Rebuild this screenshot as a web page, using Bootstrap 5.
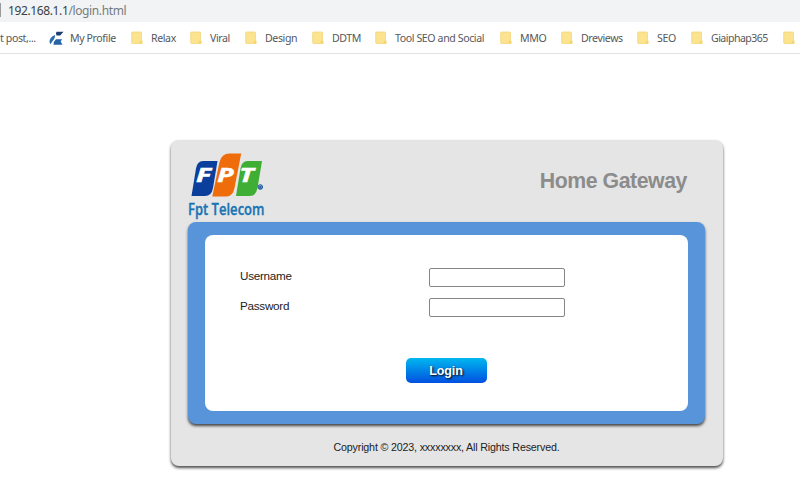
<!DOCTYPE html>
<html lang="en">
<head>
    <meta charset="UTF-8">
    <meta name="viewport" content="width=device-width, initial-scale=1.0">
    <title>Home Gateway</title>
    <link href="https://cdn.jsdelivr.net/npm/bootstrap@5.3.2/dist/css/bootstrap.min.css" rel="stylesheet">
    <style>
        body {
            background-color: #fff;
            font-family: "Liberation Sans", Arial, sans-serif;
            font-size: 12px;
            color: #222;
            height: 493px;
            overflow: hidden;
        }
        .address-bar {
            height: 22px;
            background-color: #f1f3f4;
            font-family: "Noto Sans", "Open Sans", sans-serif;
            font-size: 12px;
            letter-spacing: -.38px;
            line-height: 21px;
            color: #777b80;
        }
        .address-bar .divider {
            width: 1px;
            height: 14px;
            margin-top: 3px;
            margin-right: 7px;
            background-color: #999;
        }
        .address-bar .host {
            color: #3c4043;
        }
        .bookmarks {
            height: 32px;
            padding-top: 1px;
            border-bottom: 1px solid #dfe1e3;
            font-family: "Noto Sans", "Open Sans", sans-serif;
            font-size: 10.6px;
            letter-spacing: -.4px;
            line-height: 17px;
            color: #55585b;
        }
        .bookmarks li {
            flex: none;
            height: 17px;
            white-space: nowrap;
        }
        .bookmarks svg {
            flex: none;
            margin-right: 8px;
        }
        .gateway {
            width: 552px;
            height: 326px;
            margin: 86px 0 0 171px;
            padding: 0 18px 0 17px;
            background-color: #e5e5e5;
            border-radius: 8px;
            box-shadow: 0 2px 3px rgba(0, 0, 0, 0.7);
        }
        .gateway-head {
            height: 82px;
        }
        .gateway-head svg {
            overflow: visible;
        }
        .gateway-head h1 {
            margin: 28px 18px 0 0;
            font-size: 21.3px;
            letter-spacing: -.45px;
            line-height: 26px;
            font-weight: bold;
            color: #8c8c8c;
        }
        .blue-frame {
            height: 202px;
            padding: 13px 17px;
            background-color: #5894da;
            border-radius: 8px;
            box-shadow: 0 2px 3px rgba(0, 0, 0, 0.7);
        }
        .login-panel {
            height: 176px;
            padding: 33px 34px 0 35px;
            background-color: #fff;
            border-radius: 8px;
        }
        .field-row {
            height: 30px;
        }
        .field-row label {
            width: 189px;
            font-size: 11.7px;
            letter-spacing: -.27px;
            line-height: 16px;
        }
        .field-row input {
            width: 136px;
            height: 19px;
            padding: 1px 2px;
            border: 1px solid #858585;
            border-radius: 2px;
        }
        .btn-login {
            width: 81px;
            height: 25px;
            margin: 30px 2px 0 0;
            padding: 0;
            border: 0;
            border-radius: 5px;
            background: linear-gradient(#00b7ef, #0050e0);
            color: #fff;
            font-size: 12.5px;
            letter-spacing: -.1px;
            line-height: 24px;
            font-weight: bold;
            text-shadow: 1px 1px 2px #000;
        }
        .copyright {
            margin: 16px 0 0;
            font-size: 10.7px;
            letter-spacing: -.17px;
            line-height: 15px;
        }
    </style>
</head>
<body>
    <svg width="0" height="0" class="position-absolute">
        <symbol id="folder" viewBox="0 0 12 14">
            <path d="M1.5 1h8.2q.8 0 .8.8V9.300l.6.7v2.500h-9.600q-.8 0-.8-.8V1.800q0-.8.8-.8z" fill="#fbe38f" stroke="#f3d67a" stroke-width=".8"/>
            <path d="M8.700 12.500v-2.200l1.200-1 1.200 1v2.200z" fill="#f6d56c"/>
        </symbol>
    </svg>

    <div class="address-bar d-flex">
        <span class="divider"></span>
        <span><span class="host">192.168.1.1</span>/login.html</span>
    </div>

    <ul class="bookmarks list-unstyled d-flex align-items-center mb-0">
        <li style="width: 49px">t post,...</li>
        <li class="d-flex align-items-center" style="width: 82px">
            <svg width="15" height="15" viewBox="0 0 15 15" style="margin-right: 6px">
                <path d="M7.500 .8h7l-3.300 3.700H7.500q-1-2 0-3.700z" fill="#1d3f70"/>
                <path d="M5.800 4q.6 2.500-1 4.500l-3.500 4.800q-1.800-3 .5-6.300 1.500-2.200 4-3z" fill="#2f6cb0"/>
                <path d="M7 8.200h6.200l-1.600 2.300 1.900 3.300H4.500q-.2-3.400 2.500-5.600z" fill="#2463a5"/>
            </svg>My Profile
        </li>
        <li class="d-flex align-items-center" style="width: 59px"><svg width="12" height="14"><use href="#folder"/></svg>Relax</li>
        <li class="d-flex align-items-center" style="width: 55px"><svg width="12" height="14"><use href="#folder"/></svg>Viral</li>
        <li class="d-flex align-items-center" style="width: 67px"><svg width="12" height="14"><use href="#folder"/></svg>Design</li>
        <li class="d-flex align-items-center" style="width: 63px"><svg width="12" height="14"><use href="#folder"/></svg>DDTM</li>
        <li class="d-flex align-items-center" style="width: 125px"><svg width="12" height="14"><use href="#folder"/></svg>Tool SEO and Social</li>
        <li class="d-flex align-items-center" style="width: 61px"><svg width="12" height="14"><use href="#folder"/></svg>MMO</li>
        <li class="d-flex align-items-center" style="width: 76px"><svg width="12" height="14"><use href="#folder"/></svg>Dreviews</li>
        <li class="d-flex align-items-center" style="width: 54px"><svg width="12" height="14"><use href="#folder"/></svg>SEO</li>
        <li class="d-flex align-items-center" style="width: 92px; letter-spacing: -.55px"><svg width="12" height="14"><use href="#folder"/></svg>Giaiphap365</li>
        <li class="d-flex align-items-center"><svg width="12" height="14" class="me-0"><use href="#folder"/></svg></li>
    </ul>

    <main class="gateway">
        <div class="gateway-head d-flex justify-content-between">
            <svg width="82" height="82" viewBox="188 140 82 82">
                <path d="M203 161H217.500l-4.500 27q-1.400 8-8 8h-13.500l4.500-27.500q1.200-7.500 7-7.500z" fill="#0b3f9c"/>
                <path d="M229.500 153.600h11.700l-6.700 34.400q-1.800 8.500-8 8.500H212.300l7.200-34.400q2-8.500 10-8.500z" fill="#ee6c0a"/>
                <path d="M247.500 161H262l-4.500 27q-1.400 8-8 8H236l4.500-27.500q1.200-7.500 7-7.500z" fill="#3fae35"/>
                <g fill="#fff" stroke="#fff" stroke-width=".5" font-family="Open Sans, sans-serif" font-size="19.500" font-weight="700" font-style="italic">
                    <text transform="translate(196 181.700) scale(1.450 1)">F</text>
                    <text transform="translate(217.200 181.700) scale(1.370 1)">P</text>
                    <text transform="translate(239.200 181.700) scale(1.400 1)">T</text>
                </g>
                <circle cx="260.300" cy="187" r="2.300" fill="#8fb0d4" stroke="#1d559f" stroke-width="1"/>
                <text x="258.900" y="188.600" font-family="Open Sans, sans-serif" font-size="4" font-weight="bold" fill="#0b3f9c">R</text>
                <text x="188" y="215.200" textLength="76.500" lengthAdjust="spacingAndGlyphs" font-family="Open Sans, sans-serif" font-size="15.600" font-weight="600" fill="#1a74b4" stroke="#1a74b4" stroke-width=".35">Fpt Telecom</text>
            </svg>
            <h1>Home Gateway</h1>
        </div>
        <div class="blue-frame">
            <form class="login-panel">
                <div class="field-row d-flex align-items-start">
                    <label for="username">Username</label>
                    <input type="text" id="username">
                </div>
                <div class="field-row d-flex align-items-start">
                    <label for="password">Password</label>
                    <input type="password" id="password">
                </div>
                <div class="text-center">
                    <button type="button" class="btn btn-login">Login</button>
                </div>
            </form>
        </div>
        <p class="copyright text-center">Copyright © 2023, xxxxxxxx, All Rights Reserved.</p>
    </main>
    <script src="https://cdn.jsdelivr.net/npm/bootstrap@5.3.2/dist/js/bootstrap.bundle.min.js"></script>
</body>
</html>
